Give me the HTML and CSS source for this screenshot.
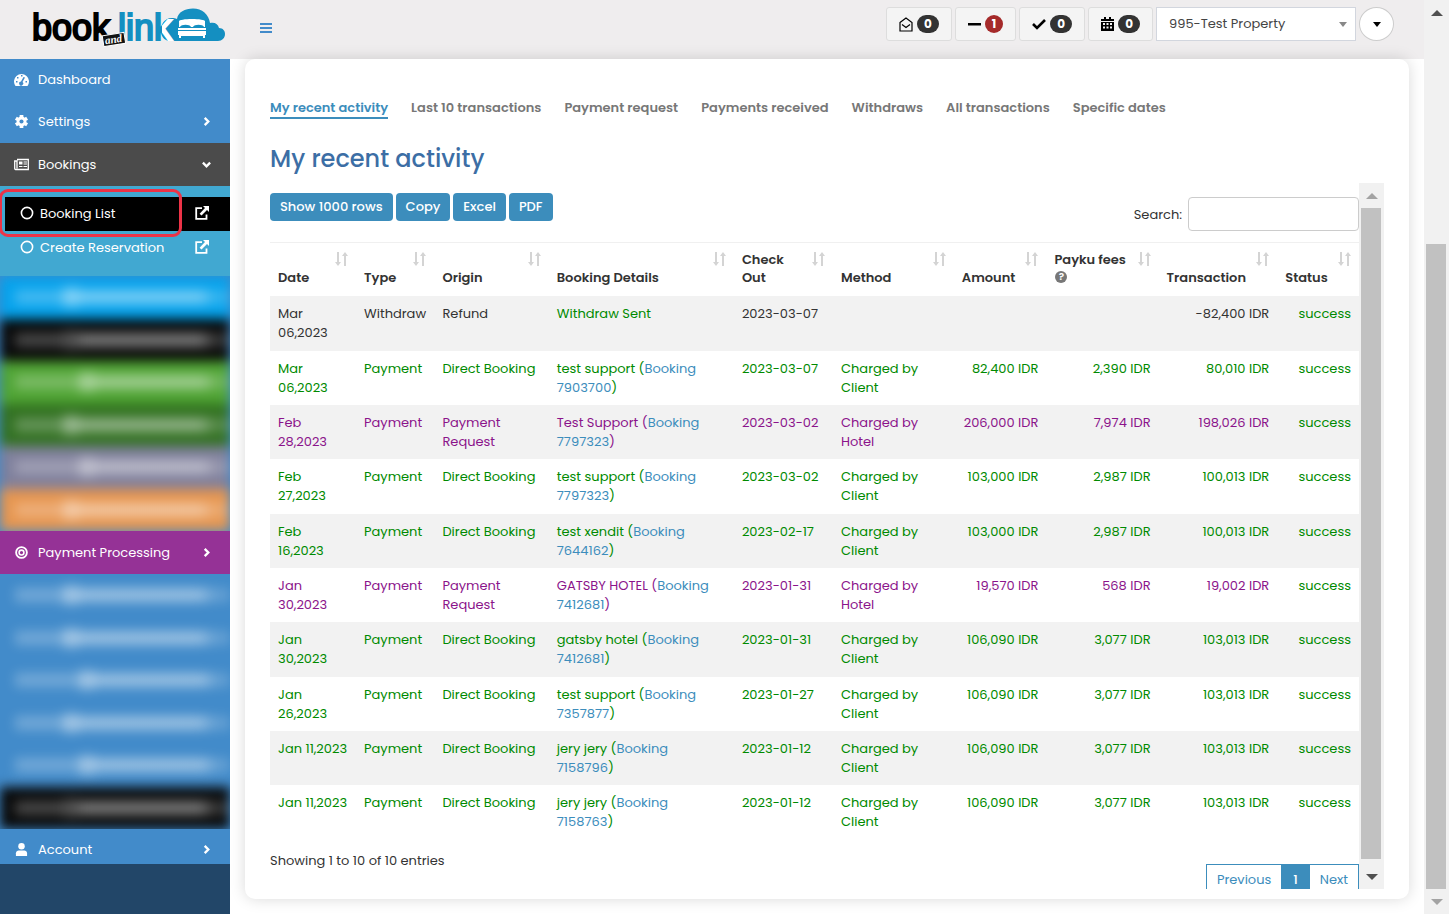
FILE: index.html
```html
<!DOCTYPE html>
<html lang="en">
<head>
    <meta charset="UTF-8">
    <meta name="viewport" content="width=device-width, initial-scale=1.0">
    <title>Book and Link - Payment Processing</title>
    <link rel="stylesheet" href="styles.css">
</head>
<body>

<!-- Shared icons -->
<svg class="sprite" aria-hidden="true">
    <symbol id="chevron" viewBox="0 0 10 10"><path d="M3 1l4 4-4 4" fill="none" stroke="currentColor" stroke-width="2.6"/></symbol>
    <symbol id="external" viewBox="0 0 14 14"><path d="M7 2.2H1.2v10.6h10.3V8.5" fill="none" stroke="currentColor" stroke-width="1.8"/><path d="M8 0h6v6l-2-2-5.5 5.6-1.9-1.9L10 2z" fill="currentColor"/></symbol>
    <symbol id="ring" viewBox="0 0 14 14"><circle cx="7" cy="7" r="5.6" fill="none" stroke="currentColor" stroke-width="1.6"/></symbol>
    <symbol id="sort" viewBox="0 0 13 14"><path d="M2 0h2v10h2l-3 4-3-4h2zM9 14h2V4h2l-3-4-3 4h2z" fill="currentColor"/></symbol>
</svg>

<div class="window">
    <div class="app">
        <header class="topbar">
            <a class="logo" href="#" aria-label="Book and Link">
                <svg width="200" height="44" viewBox="0 0 200 44">
                    <defs>
                        <linearGradient id="k-fill">
                            <stop offset="0.4" stop-color="#148fc1"/>
                            <stop offset="0.4" stop-color="#fff"/>
                        </linearGradient>
                    </defs>
                    <path d="M144 37c-4 0-8-3-9-8-1-8 3-15 11-15 2 0 3 0 5 1C152 8 159 4.500 167 4.500c9 0 16 6 17 14.500 5-1 8 1 9 5 4 0 6 3 6 6 0 4-3 7-7 7z" fill="#148fc1"/>
                    <g fill="#fff">
                        <path d="M153 23v-6c0-1 6-2 13-2s13 1 13 2v6h-1c-1-3-10-3-11 0h-2c-1-3-10-3-11 0z"/>
                        <path d="M152 24h28v2h-28zM152 27h28v4h-1v3h-2v-2h-22v2h-2v-3h-1z"/>
                    </g>
                    <text class="logo-book" x="6" y="36">book</text>
                    <text class="logo-link" x="92" y="36">lin</text>
                    <text class="logo-k" x="128" y="36">k</text>
                    <g transform="rotate(-9 88 36)">
                        <rect x="77" y="30" width="22" height="11" fill="#111" stroke="#fff"/>
                        <text class="logo-and" x="79" y="39">and</text>
                    </g>
                </svg>
            </a>
            <button class="menu-toggle" aria-label="Toggle menu"><span></span><span></span><span></span></button>

            <div class="tools">
                <button class="note" aria-label="Messages">
                    <svg width="14" height="15" viewBox="0 0 14 15"><path d="M1 5.500L7 1l6 4.500V14H1zM3 7.500L7 10.500l4-3" fill="none" stroke="#000" stroke-width="1.200"/></svg>
                    <span class="badge">0</span>
                </button>
                <button class="note" aria-label="Closed">
                    <svg width="13" height="14" viewBox="0 0 13 14"><path d="M0 6h13v2.500H0z"/></svg>
                    <span class="badge badge-red">1</span>
                </button>
                <button class="note" aria-label="Confirmed">
                    <svg width="14" height="14" viewBox="0 0 14 14"><path d="M1 7l4 4 8-8" fill="none" stroke="#000" stroke-width="2.600"/></svg>
                    <span class="badge">0</span>
                </button>
                <button class="note" aria-label="Calendar">
                    <svg width="13" height="14" viewBox="0 0 13 14"><path fill-rule="evenodd" d="M0 2h3V0h2v2h3V0h2v2h3v2H0zM0 5h13v9H0zM2 6v2h2V6zm3.500 0v2h2V6zM9 6v2h2V6zM2 9.500v2h2v-2zm3.500 0v2h2v-2zM9 9.500v2h2v-2z"/></svg>
                    <span class="badge">0</span>
                </button>
                <div class="property">
                    <select aria-label="Property"><option>995-Test Property</option></select>
                </div>
                <button class="user-menu" aria-label="User menu"><span class="caret"></span></button>
            </div>
        </header>

        <div class="body">
            <nav class="sidebar">
                <ul class="menu">
                    <li><a class="item" href="#">
                        <svg class="icon" viewBox="0 0 15 13"><path fill-rule="evenodd" d="M1.500 13A7.500 7.500 0 1 1 13.500 13zM7 2v1.500h1.500V2zM3 4v1.500h1.500V4zM2 8v1.500h1.500V8zM11.500 8v1.500H13V8zM9.500 4L7 8.500a2 2 0 1 0 1.500.5L11 4.500z" fill="currentColor"/></svg>
                        Dashboard</a></li>
                    <li><a class="item" href="#">
                        <svg class="icon" viewBox="0 0 14 14"><g fill="currentColor"><path d="M5 0h4v14H5z"/><path d="M5 0h4v14H5z" transform="rotate(60 7 7)"/><path d="M5 0h4v14H5z" transform="rotate(120 7 7)"/><circle cx="7" cy="7" r="5.300"/></g><circle cx="7" cy="7" r="2.200" fill="#428bca"/></svg>
                        Settings
                        <svg class="arrow"><use href="#chevron"/></svg></a></li>
                    <li><a class="item item-open" href="#">
                        <svg class="icon" viewBox="0 0 15 12"><path d="M3 1h11.300v10H1.500C1 11 .7 10.500.7 10V2.500H3V10" fill="none" stroke="currentColor" stroke-width="1.300"/><path d="M5 3h3.500v3H5zM9.500 3H13v1H9.500zM9.500 5H13v1H9.500zM5 7.500h3.500v1H5zM9.500 7.500H13v1H9.500z" fill="currentColor"/></svg>
                        Bookings
                        <svg class="arrow arrow-down"><use href="#chevron"/></svg></a>
                        <ul class="submenu">
                            <li><a class="subitem subitem-active" href="#"><svg class="dot"><use href="#ring"/></svg>Booking List<svg class="external"><use href="#external"/></svg></a></li>
                            <li><a class="subitem" href="#"><svg class="dot"><use href="#ring"/></svg>Create Reservation<svg class="external"><use href="#external"/></svg></a></li>
                        </ul>
                    </li>
                    <li class="masked" aria-hidden="true">
                        <div class="masked-rows">
                            <div class="mask sky"><i></i><b></b><u></u></div>
                            <div class="mask black"><i></i><b></b><u></u></div>
                            <div class="mask green"><i></i><b></b><u></u></div>
                            <div class="mask forest"><i></i><b></b><u></u></div>
                            <div class="mask slate"><i></i><b></b><u></u></div>
                            <div class="mask orange"><i></i><b></b><u></u></div>
                        </div>
                    </li>
                    <li><a class="item item-payment" href="#">
                        <svg class="icon" viewBox="0 0 14 14"><circle cx="7" cy="7" r="5.800" fill="none" stroke="currentColor" stroke-width="2"/><circle cx="7" cy="7" r="2.600" fill="none" stroke="currentColor" stroke-width="1.700"/></svg>
                        Payment Processing
                        <svg class="arrow"><use href="#chevron"/></svg></a></li>
                    <li class="masked" aria-hidden="true">
                        <div class="masked-rows">
                            <div class="mask"><i></i><b></b><u></u></div>
                            <div class="mask"><i></i><b></b><u></u></div>
                            <div class="mask"><i></i><b></b><u></u></div>
                            <div class="mask"><i></i><b></b><u></u></div>
                            <div class="mask"><i></i><b></b><u></u></div>
                            <div class="mask black"><i></i><b></b><u></u></div>
                        </div>
                    </li>
                    <li><a class="item" href="#">
                        <svg class="icon" viewBox="0 0 14 14"><circle cx="7" cy="3.500" r="3.500" fill="currentColor"/><path d="M1 14v-3c0-2 1.500-3 3-3h6c1.500 0 3 1 3 3v3z" fill="currentColor"/></svg>
                        Account
                        <svg class="arrow"><use href="#chevron"/></svg></a></li>
                </ul>
                <div class="highlight"></div>
            </nav>

            <main class="card">
                <div class="tabs">
                    <a class="tab tab-active" href="#">My recent activity</a>
                    <a class="tab" href="#">Last 10 transactions</a>
                    <a class="tab" href="#">Payment request</a>
                    <a class="tab" href="#">Payments received</a>
                    <a class="tab" href="#">Withdraws</a>
                    <a class="tab" href="#">All transactions</a>
                    <a class="tab" href="#">Specific dates</a>
                </div>
                <h1>My recent activity</h1>

                <div class="pane">
                    <div class="content">
                        <div class="controls">
                            <div class="exports">
                                <button>Show 1000 rows</button>
                                <button>Copy</button>
                                <button>Excel</button>
                                <button>PDF</button>
                            </div>
                            <label class="search">Search: <input type="search"></label>
                        </div>

                        <table>
                            <colgroup>
                                <col class="c-date"><col class="c-type"><col class="c-origin"><col class="c-details"><col class="c-out">
                                <col class="c-method"><col class="c-amount"><col class="c-fees"><col class="c-trans"><col class="c-status">
                            </colgroup>
                            <thead>
                                <tr>
                                    <th>Date<svg class="sort"><use href="#sort"/></svg></th>
                                    <th>Type<svg class="sort"><use href="#sort"/></svg></th>
                                    <th>Origin<svg class="sort"><use href="#sort"/></svg></th>
                                    <th>Booking Details<svg class="sort"><use href="#sort"/></svg></th>
                                    <th>Check<br>Out<svg class="sort"><use href="#sort"/></svg></th>
                                    <th>Method<svg class="sort"><use href="#sort"/></svg></th>
                                    <th>Amount<svg class="sort"><use href="#sort"/></svg></th>
                                    <th>Payku fees<br><span class="help">?</span><svg class="sort"><use href="#sort"/></svg></th>
                                    <th>Transaction<svg class="sort"><use href="#sort"/></svg></th>
                                    <th>Status<svg class="sort"><use href="#sort"/></svg></th>
                                </tr>
                            </thead>
                            <tbody>
                                <tr class="withdraw"><td>Mar<br>06,2023</td><td>Withdraw</td><td>Refund</td><td class="sent">Withdraw Sent</td><td>2023-03-07</td><td></td><td></td><td></td><td>-82,400 IDR</td><td>success</td></tr>
                                <tr><td>Mar<br>06,2023</td><td>Payment</td><td>Direct Booking</td><td>test support (<a href="#">Booking<br>7903700</a>)</td><td>2023-03-07</td><td>Charged by<br>Client</td><td>82,400 IDR</td><td>2,390 IDR</td><td>80,010 IDR</td><td>success</td></tr>
                                <tr class="request"><td>Feb<br>28,2023</td><td>Payment</td><td>Payment<br>Request</td><td>Test Support (<a href="#">Booking<br>7797323</a>)</td><td>2023-03-02</td><td>Charged by<br>Hotel</td><td>206,000 IDR</td><td>7,974 IDR</td><td>198,026 IDR</td><td>success</td></tr>
                                <tr><td>Feb<br>27,2023</td><td>Payment</td><td>Direct Booking</td><td>test support (<a href="#">Booking<br>7797323</a>)</td><td>2023-03-02</td><td>Charged by<br>Client</td><td>103,000 IDR</td><td>2,987 IDR</td><td>100,013 IDR</td><td>success</td></tr>
                                <tr><td>Feb<br>16,2023</td><td>Payment</td><td>Direct Booking</td><td>test xendit (<a href="#">Booking<br>7644162</a>)</td><td>2023-02-17</td><td>Charged by<br>Client</td><td>103,000 IDR</td><td>2,987 IDR</td><td>100,013 IDR</td><td>success</td></tr>
                                <tr class="request"><td>Jan<br>30,2023</td><td>Payment</td><td>Payment<br>Request</td><td>GATSBY HOTEL (<a href="#">Booking<br>7412681</a>)</td><td>2023-01-31</td><td>Charged by<br>Hotel</td><td>19,570 IDR</td><td>568 IDR</td><td>19,002 IDR</td><td>success</td></tr>
                                <tr><td>Jan<br>30,2023</td><td>Payment</td><td>Direct Booking</td><td>gatsby hotel (<a href="#">Booking<br>7412681</a>)</td><td>2023-01-31</td><td>Charged by<br>Client</td><td>106,090 IDR</td><td>3,077 IDR</td><td>103,013 IDR</td><td>success</td></tr>
                                <tr><td>Jan<br>26,2023</td><td>Payment</td><td>Direct Booking</td><td>test support (<a href="#">Booking<br>7357877</a>)</td><td>2023-01-27</td><td>Charged by<br>Client</td><td>106,090 IDR</td><td>3,077 IDR</td><td>103,013 IDR</td><td>success</td></tr>
                                <tr><td>Jan 11,2023</td><td>Payment</td><td>Direct Booking</td><td>jery jery (<a href="#">Booking<br>7158796</a>)</td><td>2023-01-12</td><td>Charged by<br>Client</td><td>106,090 IDR</td><td>3,077 IDR</td><td>103,013 IDR</td><td>success</td></tr>
                                <tr><td>Jan 11,2023</td><td>Payment</td><td>Direct Booking</td><td>jery jery (<a href="#">Booking<br>7158763</a>)</td><td>2023-01-12</td><td>Charged by<br>Client</td><td>106,090 IDR</td><td>3,077 IDR</td><td>103,013 IDR</td><td>success</td></tr>
                            </tbody>
                        </table>

                        <div class="table-footer">
                            <p>Showing 1 to 10 of 10 entries</p>
                            <div class="pages">
                                <a href="#">Previous</a>
                                <a class="current" href="#">1</a>
                                <a href="#">Next</a>
                            </div>
                        </div>
                    </div>
                    <div class="scrollbar">
                        <span class="step up muted"></span>
                        <span class="thumb"></span>
                        <span class="step down"></span>
                    </div>
                </div>
            </main>
        </div>
    </div>

    <div class="scrollbar scrollbar-page">
        <span class="step up"></span>
        <span class="thumb"></span>
        <span class="step down muted"></span>
    </div>
</div>

</body>
</html>
```
FILE: styles.css
```css
* {
    box-sizing: border-box;
}

body {
    margin: 0;
    font-family: Poppins, Inter, 'Open Sans', sans-serif;
    font-size: 13px;
    line-height: 19px;
    color: #333;
    background-color: #fff;
}

a {
    color: #3c8dbc;
    text-decoration: none;
}

button,
input,
select {
    font: inherit;
}

ul {
    list-style: none;
    margin: 0;
    padding: 0;
}

.sprite {
    display: none;
}

.window {
    display: flex;
    height: 100vh;
    overflow: hidden;
}

.app {
    flex: 1;
    min-width: 0;
    display: flex;
    flex-direction: column;
}

/* Top bar */
.topbar {
    display: flex;
    align-items: center;
    height: 59px;
    padding: 0 30px 11px 26px;
    background-color: #efedee;
}

.logo {
    display: flex;
    padding-top: 4px;
}

.logo text {
    font-family: 'Liberation Sans', Arial, sans-serif;
    font-size: 36px;
    stroke-width: 2px;
}

.logo .logo-book {
    fill: #000;
    stroke: #000;
}

.logo .logo-link {
    fill: #148fc1;
    stroke: #148fc1;
}

.logo .logo-k {
    fill: url(#k-fill);
    stroke: url(#k-fill);
}

.logo .logo-and {
    font-family: 'Liberation Serif', serif;
    font-size: 11px;
    font-style: italic;
    font-weight: bold;
    fill: #fff;
    stroke: none;
}

.menu-toggle {
    display: flex;
    flex-direction: column;
    gap: 2px;
    margin: 8px 0 0 34px;
    padding: 0;
    border: none;
    background: none;
    cursor: pointer;
}

.menu-toggle span {
    width: 12px;
    height: 2px;
    background-color: #428bca;
}

.tools {
    display: flex;
    gap: 3px;
    margin-left: auto;
}

.note {
    display: flex;
    align-items: center;
    gap: 4px;
    height: 34px;
    padding: 0 12px;
    border: 1px solid #ddd;
    border-radius: 3px;
    background-color: #f4f4f4;
    cursor: pointer;
}

.badge {
    padding: 0 7px;
    border-radius: 10px;
    background-color: #333;
    color: #fff;
    font-size: 12px;
    font-weight: 700;
    line-height: 18px;
}

.badge-red {
    background-color: #a52a2a;
}

.property {
    position: relative;
}

.property select {
    appearance: none;
    width: 200px;
    height: 34px;
    padding: 0 12px 2px;
    border: 1px solid #d2d6de;
    border-radius: 0;
    background-color: #fff;
    color: #444;
}

.property::after {
    content: '';
    position: absolute;
    top: 15px;
    right: 9px;
    border: 4px solid transparent;
    border-top: 5px solid #888;
    border-bottom: none;
}

.user-menu {
    display: flex;
    align-items: center;
    justify-content: center;
    width: 35px;
    height: 34px;
    border: 1px solid #ccc;
    border-radius: 50%;
    background-color: #fff;
    cursor: pointer;
}

.caret {
    flex: none;
    border: 4px solid transparent;
    border-top: 5px solid #000;
    border-bottom: none;
}

.body {
    flex: 1;
    min-height: 0;
    display: flex;
}

/* Sidebar */
.sidebar {
    position: relative;
    flex: none;
    width: 230px;
    padding-bottom: 50px;
    background-color: #224668;
}

.menu {
    height: 100%;
    overflow: hidden;
    background-color: #428bca;
}

.item {
    display: flex;
    align-items: center;
    gap: 9px;
    height: 42px;
    padding: 0 19px 1px 14px;
    color: #fff;
}

.item:hover {
    background-color: #3a7db8;
}

.item-open,
.item-open:hover {
    height: 43px;
    background-color: #4b4b4b;
}

.item-payment,
.item-payment:hover {
    height: 43px;
    background-color: #953296;
}

.icon {
    width: 15px;
    height: 13px;
}

.arrow {
    width: 9px;
    height: 9px;
    margin-left: auto;
}

.arrow-down {
    transform: rotate(90deg);
}

.submenu {
    padding: 11px 0 11px 5px;
    background-color: #41a8d1;
}

.subitem {
    display: flex;
    align-items: center;
    gap: 6px;
    height: 34px;
    padding: 0 21px 2px 15px;
    color: #fff;
}

.subitem-active {
    background-color: #000;
}

.dot {
    width: 14px;
    height: 14px;
}

.external {
    width: 14px;
    height: 14px;
    margin-left: auto;
}

.highlight {
    position: absolute;
    top: 130px;
    left: -1px;
    width: 183px;
    height: 48px;
    border: 3px solid #ed3347;
    border-radius: 9px;
    pointer-events: none;
}

.masked {
    overflow: hidden;
}

.masked-rows {
    display: grid;
    grid-template-rows: repeat(6, 1fr);
    height: 255px;
    filter: blur(6px);
}

.mask {
    display: flex;
    align-items: center;
    padding-left: 15px;
    color: #fff;
}

.mask i,
.mask b,
.mask u {
    height: 14px;
    background-color: currentColor;
}

.mask i {
    width: 48px;
    opacity: 0.25;
}

.mask b {
    width: 16px;
    height: 18px;
    opacity: 0.5;
}

.mask u {
    flex: 1;
    background: linear-gradient(to right, #fff 80%, #fff6 90%);
    opacity: 0.45;
}

.mask:nth-child(3) i,
.mask:nth-child(5) i {
    width: 64px;
}

.black b {
    opacity: 0.3;
}

.sky { background-color: #04a2ec; }
.black { background-color: #080808; }
.green { background-color: #4fa433; }
.forest { background-color: #317020; }
.slate { background-color: #7f7f9b; }
.orange { background-color: #e7954e; }

/* Main card */
.card {
    flex: 1;
    min-width: 0;
    display: flex;
    flex-direction: column;
    margin: 0 15px 15px;
    padding: 39px 25px 10px;
    border-radius: 10px;
    background-color: #fff;
    box-shadow: 0 0 15px rgba(0, 0, 0, 0.15);
}

.tabs {
    display: flex;
    gap: 23px;
}

.tab {
    border-bottom: 2px solid transparent;
    color: #777;
    font-weight: 600;
    white-space: nowrap;
}

.tab-active {
    color: #3c8dbc;
    border-color: #3c8dbc;
}

h1 {
    margin: 24px 0 9px;
    color: #3c6ea5;
    font-size: 24px;
    font-weight: 500;
    line-height: 31px;
}

.pane {
    flex: 1;
    min-height: 0;
    display: flex;
    overflow: hidden;
}

.content {
    flex: 1;
    min-width: 0;
}

.controls {
    display: flex;
    justify-content: space-between;
    padding: 10px 0 11px;
}

.exports {
    display: flex;
    gap: 3px;
}

.exports button {
    height: 28px;
    padding: 0 10px 2px;
    border: none;
    border-radius: 4px;
    background-color: #3c8dbc;
    color: #fff;
    font-weight: 500;
    cursor: pointer;
}

.exports button:hover {
    background-color: #367fa9;
}

.search {
    display: flex;
    align-items: center;
    gap: 6px;
    padding-top: 4px;
}

.search input {
    width: 171px;
    height: 34px;
    padding: 0 10px;
    border: 1px solid #ccc;
    border-radius: 4px;
}

/* Transactions */
table {
    width: 100%;
    table-layout: fixed;
    border-collapse: separate;
    border-spacing: 0;
}

.c-date { width: 7.9%; }
.c-type { width: 7.2%; }
.c-origin { width: 10.5%; }
.c-details { width: 17%; }
.c-out { width: 9.1%; }
.c-method { width: 11.1%; }
.c-amount { width: 8.5%; }
.c-fees { width: 10.3%; }
.c-trans { width: 10.9%; }
.c-status { width: 7.5%; }

th {
    position: relative;
    height: 54px;
    padding: 7px 8px 9px;
    border-top: 1px solid #f0f0f0;
    font-weight: 600;
    line-height: 18px;
    text-align: left;
    vertical-align: bottom;
    white-space: nowrap;
}

.sort {
    position: absolute;
    top: 9px;
    right: 8px;
    width: 13px;
    height: 14px;
    color: #d4d4d4;
}

.help {
    display: block;
    width: 12px;
    height: 12px;
    margin: 2px 0 4px 1px;
    border-radius: 50%;
    background-color: #777;
    color: #fff;
    font-size: 10px;
    line-height: 12px;
    text-align: center;
}

td {
    height: 54px;
    padding: 8px;
    color: #008a00;
    vertical-align: top;
    white-space: nowrap;
}

tbody tr:nth-child(odd) {
    background-color: #f2f2f2;
}

tbody tr:nth-child(3n + 1) td {
    height: 55px;
}

td:nth-child(n + 7) {
    text-align: right;
}

.withdraw td {
    color: #333;
}

.request td {
    color: #8b148b;
}

td.sent,
tr td:last-child {
    color: #008a00;
}

.table-footer {
    display: flex;
    justify-content: space-between;
    padding-top: 11px;
}

.table-footer p {
    margin: 0;
}

.pages {
    display: flex;
    margin-top: 13px;
    border: 1px solid #3c8dbc;
}

.pages a {
    padding: 5px 10px;
}

.pages .current {
    padding: 5px 12px;
    background-color: #3c8dbc;
    color: #fff;
    font-weight: 500;
}

/* Scrollbars */
.scrollbar {
    flex: none;
    display: flex;
    flex-direction: column;
    width: 25px;
    background-color: #f1f1f1;
}

.thumb {
    flex: 1;
    margin: 0 3px 5px 2px;
    background-color: #c1c1c1;
}

.scrollbar-page .thumb {
    margin: 24vh 3px 0 2px;
}

.step {
    flex: none;
    height: 25px;
    padding: 10px 0 0 7px;
    color: #505050;
}

.step::before {
    content: '';
    display: block;
    width: 0;
    border: 6px solid transparent;
}

.up::before {
    border-top: none;
    border-bottom-color: currentColor;
}

.down::before {
    border-bottom: none;
    border-top-color: currentColor;
}

.muted {
    color: #a3a3a3;
}
```
